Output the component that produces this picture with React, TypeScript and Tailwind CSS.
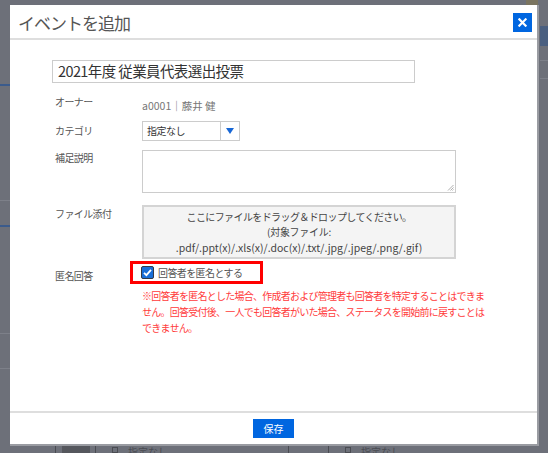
import React from "react";

const FONT = { fontFamily: '"Noto Sans CJK JP", "Noto Sans", sans-serif' };

function Background() {
    // faint page content under the overlay
    return (
        <div className="absolute inset-0 bg-[#6d7079] overflow-hidden">
            <div className="absolute left-0 top-[84px] w-[10px] h-[2px] bg-[#3b5b8c]" />
            <div className="absolute left-0 top-[200px] w-[10px] h-[1px] bg-[#7d8089]" />
            <div className="absolute left-0 top-[225px] w-[10px] h-[2px] bg-[#3b5b8c]" />
            <div className="absolute left-0 top-[333px] w-[10px] h-[1px] bg-[#7d8089]" />
            <div className="absolute left-0 top-[368px] w-[10px] h-[1px] bg-[#7d8089]" />
            <div className="absolute right-0 top-[26px] w-[8px] h-[20px] bg-[#4a5f80]" />
            <div className="absolute right-0 top-[60px] w-[8px] h-[1px] bg-[#7d8089]" />
            <div className="absolute right-0 top-[78px] w-[8px] h-[1px] bg-[#7d8089]" />
            <div className="absolute right-[10px] top-0 w-[12px] h-[5px] bg-[#7a7460]" />
            <div className="absolute left-[55px] top-[446px] w-[1px] h-[7px] bg-[#4a4c52]" />
            <div className="absolute left-[62px] top-[446px] w-[28px] h-[7px] bg-[#55575d]" />
            <div className="absolute left-[95px] top-[446px] w-[1px] h-[7px] bg-[#4a4c52]" />
            <div className="absolute left-[112px] top-[447px] w-[6px] h-[6px] border border-[#4a4c52]" />
            <div className="absolute left-[128px] top-[446px] text-[10px] leading-[12px] text-[#4a4c52]">指定なし</div>
            <div className="absolute left-[288px] top-[446px] w-[1px] h-[7px] bg-[#4a4c52]" />
            <div className="absolute left-[328px] top-[446px] w-[1px] h-[7px] bg-[#4a4c52]" />
            <div className="absolute left-[345px] top-[447px] w-[6px] h-[6px] border border-[#4a4c52]" />
            <div className="absolute left-[361px] top-[446px] text-[10px] leading-[12px] text-[#4a4c52]">指定なし</div>
        </div>
    );
}

function Row({ label, labelClass = "", children }: { label: string; labelClass?: string; children: React.ReactNode }) {
    return (
        <div className="flex">
            <div className={`w-[90px] shrink-0 pl-[3px] text-[10px] tracking-[-0.6px] text-[#555] ${labelClass}`}>{label}</div>
            <div className="flex-1">{children}</div>
        </div>
    );
}

export default function App() {
    return (
        <div className="relative w-[548px] h-[453px] overflow-hidden" style={FONT}>
            <Background />
            <div className="relative pt-[5px] pl-[10px]">
                <div className="w-[529px] h-[441px] bg-white flex flex-col border-r-2 border-b-2 border-[#9a9ca2]">
                    {/* Header */}
                    <div className="h-[35px] shrink-0 flex items-center justify-between pl-[8px] pr-[5px] border-b-2 border-[#dedede]">
                        <span className="text-[17px] tracking-[-1px] text-[#555] leading-none pt-[1px]">イベントを追加</span>
                        <button className="w-[19px] h-[19px] bg-[#0066e0] flex items-center justify-center mt-[1px]">
                            <svg width="9" height="9" viewBox="0 0 10 10">
                                <path d="M1.5 1.5 L8.5 8.5 M8.5 1.5 L1.5 8.5" stroke="#fff" strokeWidth="2.4" strokeLinecap="square" />
                            </svg>
                        </button>
                    </div>

                    {/* Body */}
                    <div className="flex-1 flex flex-col pl-[42px]">
                        <div className="mt-[20px] h-[23px] w-[363px] border border-[#ccc] flex items-center px-[5px] text-[14.5px] tracking-[-0.6px] text-[#333] leading-none">
                            2021年度 従業員代表選出投票
                        </div>

                        <div className="mt-[8px] h-[22px]">
                            <Row label="オーナー" labelClass="leading-[22px]">
                                <span className="text-[10.5px] leading-[22px] text-[#777]">a0001｜藤井 健</span>
                            </Row>
                        </div>

                        <div className="mt-[8px]">
                            <Row label="カテゴリ" labelClass="leading-[20px]">
                                <div className="w-[98px] h-[20px] border border-[#ccc] flex">
                                    <span className="flex-1 text-[10px] tracking-[-0.5px] leading-[18px] pl-[4px] text-[#333]">指定なし</span>
                                    <span className="w-[19px] border-l border-[#ccc] flex items-center justify-center">
                                        <svg width="8" height="6" viewBox="0 0 8 6">
                                            <path d="M0 0 H8 L4 6 Z" fill="#1767d6" />
                                        </svg>
                                    </span>
                                </div>
                            </Row>
                        </div>

                        <div className="mt-[9px]">
                            <Row label="補足説明" labelClass="leading-[16px]">
                                <div className="relative w-[314px] h-[43px] border border-[#ccc]">
                                    <svg className="absolute right-[1px] bottom-[1px]" width="7" height="7" viewBox="0 0 7 7">
                                        <path d="M6.5 1 L1 6.5 M6.5 3.5 L3.5 6.5 M6.5 5.5 L5.5 6.5" stroke="#999" strokeWidth="0.8" />
                                    </svg>
                                </div>
                            </Row>
                        </div>

                        <div className="mt-[12px]">
                            <Row label="ファイル添付" labelClass="leading-[18px]">
                                <div className="w-[314px] h-[54px] border-2 border-[#d4d4d4] bg-[#f4f4f4] flex flex-col items-center justify-center text-[#444]">
                                    <span className="text-[10px] tracking-[-0.6px] leading-[15.5px]">ここにファイルをドラッグ＆ドロップしてください。</span>
                                    <span className="text-[10px] tracking-[-0.3px] leading-[15.5px]">(対象ファイル:</span>
                                    <span className="text-[10.5px] leading-[15.5px]">.pdf/.ppt(x)/.xls(x)/.doc(x)/.txt/.jpg/.jpeg/.png/.gif)</span>
                                </div>
                            </Row>
                        </div>

                        <div className="mt-[2px] flex">
                            <div className="w-[78px] shrink-0 pl-[3px] pt-[3px] text-[10px] tracking-[-0.6px] leading-[23px] text-[#555]">匿名回答</div>
                            <div className="flex flex-col">
                                <div className="w-[133px] h-[23px] border-[3px] border-[#ff0000] flex items-center pl-[8px] gap-[4px]">
                                    <svg width="13" height="13" viewBox="0 0 13 13">
                                        <rect x="0.5" y="0.5" width="12" height="12" rx="1.5" fill="#1a6fd8" stroke="#333a48" />
                                        <path d="M3 6.8 L5.4 9.2 L10 3.8" fill="none" stroke="#fff" strokeWidth="1.8" />
                                    </svg>
                                    <span className="text-[10px] tracking-[-0.6px] text-[#555] leading-none">回答者を匿名とする</span>
                                </div>
                                <div className="mt-[4px] ml-[12px] text-[10px] tracking-[-0.75px] leading-[16px] text-[#ff3b3b] whitespace-nowrap">
                                    ※回答者を匿名とした場合、作成者および管理者も回答者を特定することはできま
                                    <br />
                                    せん。回答受付後、一人でも回答者がいた場合、ステータスを開始前に戻すことは
                                    <br />
                                    できません。
                                </div>
                            </div>
                        </div>
                    </div>

                    {/* Footer */}
                    <div className="h-[33px] shrink-0 border-t-2 border-[#dedede] flex justify-center pt-[6px]">
                        <button className="w-[41px] h-[19px] bg-[#0066e0] text-white text-[10px] leading-none">保存</button>
                    </div>
                </div>
            </div>
        </div>
    );
}
